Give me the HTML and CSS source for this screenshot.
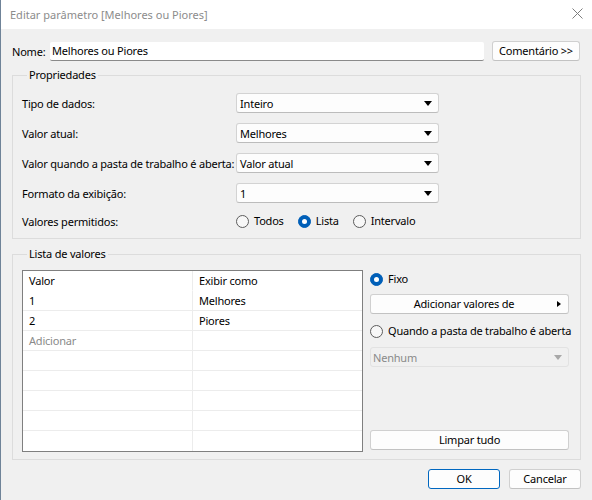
FILE: index.html
```html
<!DOCTYPE html>
<html lang="pt">
<head>
<meta charset="utf-8">
<title>Editar parâmetro</title>
<link rel="stylesheet" href="styles.css">
</head>
<body>
<div class="window">
  <div class="titlebar">
    <span class="title">Editar parâmetro [Melhores ou Piores]</span>
    <svg class="close" width="11" height="11" viewBox="0 0 11 11"><path d="M0.5 0.5 L10.5 10.5 M10.5 0.5 L0.5 10.5" stroke="#7d7d7d" stroke-width="1" fill="none"/></svg>
  </div>
  <div class="content">
    <div class="name-row">
      <span class="name-label">Nome:</span>
      <div class="name-input">Melhores ou Piores</div>
      <div class="btn comment-btn">Comentário &gt;&gt;</div>
    </div>

    <fieldset class="group props">
      <legend>Propriedades</legend>
      <div class="props-grid">
        <span class="lbl">Tipo de dados:</span>
        <div class="select"><span>Inteiro</span><i class="caret"></i></div>
        <span class="lbl">Valor atual:</span>
        <div class="select"><span>Melhores</span><i class="caret"></i></div>
        <span class="lbl">Valor quando a pasta de trabalho é aberta:</span>
        <div class="select"><span>Valor atual</span><i class="caret"></i></div>
        <span class="lbl">Formato da exibição:</span>
        <div class="select"><span>1</span><i class="caret"></i></div>
        <span class="lbl">Valores permitidos:</span>
        <div class="radios">
          <span class="opt"><i class="radio"></i>Todos</span>
          <span class="opt"><i class="radio on"></i>Lista</span>
          <span class="opt"><i class="radio"></i>Intervalo</span>
        </div>
      </div>
    </fieldset>

    <fieldset class="group list">
      <legend>Lista de valores</legend>
      <div class="list-body">
        <div class="table">
          <div class="cell">Valor</div><div class="cell">Exibir como</div>
          <div class="cell">1</div><div class="cell">Melhores</div>
          <div class="cell">2</div><div class="cell">Piores</div>
          <div class="cell muted">Adicionar</div><div class="cell"></div>
          <div class="cell"></div><div class="cell"></div>
          <div class="cell"></div><div class="cell"></div>
          <div class="cell"></div><div class="cell"></div>
          <div class="cell"></div><div class="cell"></div>
          <div class="cell last"></div><div class="cell last"></div>
        </div>
        <div class="side">
          <span class="opt fixo"><i class="radio on"></i>Fixo</span>
          <div class="btn add-btn"><span class="add-text">Adicionar valores de</span><i class="rcaret"></i></div>
          <span class="opt quando"><i class="radio"></i>Quando a pasta de trabalho é aberta</span>
          <div class="select disabled"><span>Nenhum</span><i class="caret"></i></div>
          <div class="btn clear-btn">Limpar tudo</div>
        </div>
      </div>
    </fieldset>

    <div class="footer">
      <div class="btn ok">OK</div>
      <div class="btn cancel">Cancelar</div>
    </div>
  </div>
</div>
</body>
</html>
```
FILE: styles.css
```css
* { box-sizing: border-box; }
html, body { margin: 0; padding: 0; }
body {
  width: 592px;
  height: 500px;
  overflow: hidden;
  font-family: "Noto Sans", "Open Sans", sans-serif;
  font-size: 11px;
  letter-spacing: -0.2px;
  color: #000;
  background: #f0f0f0;
}
.window {
  width: 592px;
  height: 500px;
  background: #f0f0f0;
  border-left: 1px solid #6f8398;
}
.titlebar {
  height: 29px;
  background: #fff;
  display: flex;
  align-items: center;
  justify-content: space-between;
  padding: 0 9px 1px 9px;
}
.title { color: #8c8c8c; font-size: 11px; letter-spacing: 0; }
.close { margin-top: -2px; margin-right: 0; }

.content { padding: 0 11px 0 11px; }

.name-row {
  display: flex;
  align-items: center;
  margin-top: 12px;
  height: 20px;
}
.name-label { width: 38px; }
.name-input {
  width: 434px;
  height: 19px;
  margin-top: 1px;
  background: #fff;
  border-bottom: 1px solid #8a8a8a;
  border-radius: 2px;
  padding-left: 2px;
  line-height: 18px;
}
.btn {
  height: 20px;
  background: #fdfdfd;
  border: 1px solid #d0d0d0;
  border-bottom-color: #c2c2c2;
  border-radius: 3px;
  display: flex;
  align-items: center;
  justify-content: center;
  line-height: 18px;
}
.comment-btn { width: 88px; margin-left: 8px; }

.group {
  margin: 0;
  border: 1px solid #dcdcdc;
  width: 569px;
  min-width: 0;
}
.group legend {
  padding: 0 2px;
  margin-left: 5px;
  line-height: 16px;
  height: 16px;
}
.props { margin-top: 6px; padding: 10px 0 9px 9px; }
.props-grid {
  display: grid;
  grid-template-columns: 214px 203px;
  grid-template-rows: repeat(4, 20px) 16px;
  row-gap: 10px;
  align-items: center;
}
.lbl { white-space: nowrap; }
.select {
  height: 20px;
  background: #fdfdfd;
  border: 1px solid #d3d3d3;
  border-bottom-color: #bcbcbc;
  border-radius: 3px;
  display: flex;
  align-items: center;
  justify-content: space-between;
  padding: 0 6px 0 3px;
}
.caret {
  width: 0;
  height: 0;
  border-left: 4px solid transparent;
  border-right: 4px solid transparent;
  border-top: 5px solid #000;
}
.select.disabled {
  background: #f0f0f0;
  border-color: #e2e2e2;
  color: #8a8a8a;
}
.select.disabled .caret { border-top-color: #a8a8a8; }

.radios { display: flex; align-items: center; height: 16px; }
.opt { display: flex; align-items: center; line-height: 16px; white-space: nowrap; }
.radios .opt { margin-right: 14px; }
.radio {
  flex-shrink: 0;
  width: 13px;
  height: 13px;
  border-radius: 50%;
  border: 1px solid #5c5c5c;
  background: #f7f7f7;
  margin-right: 5px;
  display: inline-flex;
  align-items: center;
  justify-content: center;
}
.radio.on { background: #005fb8; border-color: #005fb8; }
.radio.on::after {
  content: "";
  width: 5px;
  height: 5px;
  border-radius: 50%;
  background: #fff;
}

.list { margin-top: 7px; padding: 8px 0 7px 9px; }
.list-body { display: flex; gap: 7px; }
.table {
  width: 341px;
  display: grid;
  grid-template-columns: 170px 169px;
  grid-auto-rows: 20px;
  background: #fff;
  border: 1px solid #7f7f7f;
}
.cell {
  border-bottom: 1px solid #ececec;
  padding-left: 6px;
  line-height: 19px;
}
.cell:nth-child(odd) { border-right: 1px solid #ececec; }
.cell:nth-child(1), .cell:nth-child(2) { border-bottom-color: #fff; }
.cell.last { border-bottom: none; }
.muted { color: #8a8a8a; }

.side {
  width: 199px;
  display: flex;
  flex-direction: column;
  padding-top: 1px;
}
.fixo { height: 16px; }
.add-btn { margin-top: 7px; padding: 0 7px 0 0; }
.add-text { flex: 1; text-align: center; }
.rcaret {
  width: 0; height: 0;
  border-top: 3.5px solid transparent;
  border-bottom: 3.5px solid transparent;
  border-left: 4px solid #000;
}
.quando { margin-top: 9px; height: 16px; }
.side .select { margin-top: 8px; padding-left: 2px; }
.clear-btn { margin-top: auto; margin-bottom: 2px; }

.footer {
  display: flex;
  justify-content: flex-end;
  gap: 9px;
  margin-top: 9px;
}
.ok { width: 72px; border: 1px solid #0067c0; }
.cancel { width: 72px; }
```
